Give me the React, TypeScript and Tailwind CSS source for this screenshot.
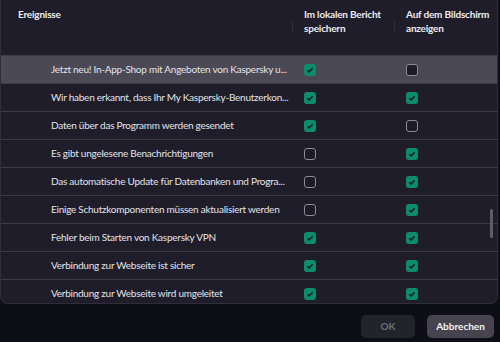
import React from "react";

const rows: [string, boolean, boolean][] = [
  ["Jetzt neu! In-App-Shop mit Angeboten von Kaspersky u...", true, false],
  ["Wir haben erkannt, dass Ihr My Kaspersky-Benutzerkon...", true, true],
  ["Daten über das Programm werden gesendet", true, false],
  ["Es gibt ungelesene Benachrichtigungen", false, true],
  ["Das automatische Update für Datenbanken und Progra...", false, true],
  ["Einige Schutzkomponenten müssen aktualisiert werden", false, true],
  ["Fehler beim Starten von Kaspersky VPN", true, true],
  ["Verbindung zur Webseite ist sicher", true, true],
  ["Verbindung zur Webseite wird umgeleitet", true, true],
];

function Box({ on }: { on: boolean }) {
  if (on)
    return (
      <div className="w-[12px] h-[12px] rounded-[3px] bg-[#0c8c6d] flex items-center justify-center">
        <svg width="8" height="8" viewBox="0 0 8 8">
          <path d="M1.3 4.2 L3.1 5.9 L6.6 2.2" fill="none" stroke="#10201c" strokeWidth="1.5" />
        </svg>
      </div>
    );
  return <div className="w-[12px] h-[12px] rounded-[3px] border border-[#8b8a96] bg-[#1c1b26]" />;
}

export default function App() {
  return (
    <div className="w-[500px] h-[342px] bg-[#0e0e16] flex flex-col" style={{ fontFamily: "Lato, 'Noto Sans', sans-serif" }}>
      <div className="relative w-[498px] h-[304px] bg-[#1e1d29] border-x border-b border-[#2e2d39] rounded-b-[8px] flex flex-col overflow-hidden">
        <div className="flex h-[55px] shrink-0 text-[10px] font-bold text-[#ececf1] leading-[14px] tracking-[-0.2px] whitespace-nowrap">
          <div className="w-[291px] pl-[17px] pt-[7px]">Ereignisse</div>
          <div className="w-[102px] flex">
            <div className="w-px h-[12px] bg-[#2f2e3a] mt-[21px]" />
            <div className="pl-[11px] pt-[7px]">Im lokalen Bericht<br />speichern</div>
          </div>
          <div className="flex-1 flex">
            <div className="w-px h-[12px] bg-[#2f2e3a] mt-[21px]" />
            <div className="pl-[11px] pt-[7px]">Auf dem Bildschirm<br />anzeigen</div>
          </div>
        </div>
        {rows.map(([t, a, b], i) => (
          <div
            key={i}
            className={`flex items-center h-[28px] shrink-0 border-t border-[#3b3a46] text-[10px] tracking-[-0.25px] text-[#e4e4ea] ${i === 0 ? "bg-[#4a4955]" : ""}`}
          >
            <div className="w-[291px] pl-[50px] whitespace-nowrap">{t}</div>
            <div className="w-[102px] pl-[12px]"><Box on={a} /></div>
            <div className="flex-1 pl-[12px]"><Box on={b} /></div>
          </div>
        ))}
        <div className="absolute left-[489px] top-[209px] w-[3px] h-[29px] bg-[#5d5c68] rounded-full" />
      </div>
      <div className="flex justify-end gap-[12px] pr-[6px] pt-[11px]">
        <button className="w-[54px] h-[23px] rounded-[5px] bg-[#22242c] text-[10px] font-bold text-[#6e7079]">OK</button>
        <button className="w-[67px] h-[23px] rounded-[5px] bg-[#45444f] text-[10px] font-bold text-[#f2f2f5]">Abbrechen</button>
      </div>
    </div>
  );
}
